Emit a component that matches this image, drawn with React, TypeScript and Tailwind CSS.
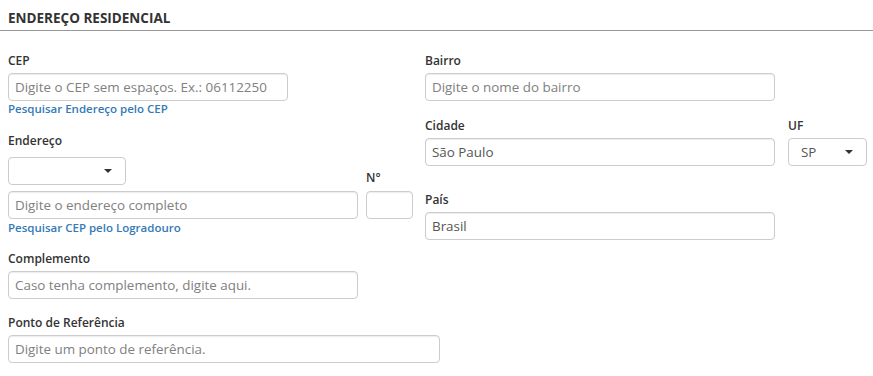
import React from 'react'

const inputCls =
  'block h-[28px] rounded-[4px] border border-[#ccc] bg-white px-[6px] text-[13.4px] text-[#555] placeholder:text-[#808080] shadow-[inset_0_1px_1px_rgba(0,0,0,0.075)] outline-none'

const labelCls = 'block h-[18px] text-[12px] font-semibold leading-[18px] text-[#333]'

const linkCls = 'block h-[16px] text-[11.5px] font-semibold leading-[16px] text-[#337ab7]'

const Caret = () => (
  <svg width="8" height="4" viewBox="0 0 8 4" className="fill-[#333]">
    <path d="M0 0h8L4 4z" />
  </svg>
)

const SelectBox: React.FC<{ value?: string; className?: string }> = ({ value, className }) => (
  <div
    className={`flex h-[28px] items-center justify-between rounded-[4px] border border-[#ccc] bg-white pl-[12px] pr-[13px] text-[13.4px] text-[#555] ${className ?? ''}`}
  >
    <span>{value ?? ''}</span>
    <Caret />
  </div>
)

const App: React.FC = () => {
  return (
    <div className="h-[376px] w-[873px] bg-white font-['Open_Sans',sans-serif]">
      {/* Section header */}
      <div className="h-[31px] border-b border-[#999] pl-2 pt-[8px] pr-[1px]">
        <h2 className="text-[13.5px] font-bold leading-[20px] text-[#333]">ENDEREÇO RESIDENCIAL</h2>
      </div>

      <div className="flex pl-2">
        {/* Left column */}
        <div className="w-[409px]">
          <div className="mt-[21px]">
            <label className={labelCls}>CEP</label>
            <input
              className={`${inputCls} mt-[3px] w-[280px]`}
              placeholder="Digite o CEP sem espaços. Ex.: 06112250"
            />
            <a className={linkCls}>Pesquisar Endereço pelo CEP</a>
          </div>

          <div className="mt-[15px] flex items-end gap-[8px]">
            <div className="w-[350px]">
              <label className={labelCls}>Endereço</label>
              <SelectBox className="mt-[7px] w-[118px]" />
              <input className={`${inputCls} mt-[6px] w-full`} placeholder="Digite o endereço completo" />
            </div>
            <div className="w-[47px]">
              <label className={labelCls}>N°</label>
              <input className={`${inputCls} mt-[4px] w-full`} />
            </div>
          </div>
          <a className={`${linkCls} mt-[1px]`}>Pesquisar CEP pelo Logradouro</a>

          <div className="mt-[14px] w-[350px]">
            <label className={labelCls}>Complemento</label>
            <input className={`${inputCls} mt-[3px] w-full`} placeholder="Caso tenha complemento, digite aqui." />
          </div>

          <div className="mt-[15px] w-[432px]">
            <label className={labelCls}>Ponto de Referência</label>
            <input className={`${inputCls} mt-[3px] w-full`} placeholder="Digite um ponto de referência." />
          </div>
        </div>

        {/* Right column */}
        <div className="ml-[8px] w-[443px]">
          <div className="mt-[21px] w-[350px]">
            <label className={labelCls}>Bairro</label>
            <input className={`${inputCls} mt-[3px] w-full`} placeholder="Digite o nome do bairro" />
          </div>

          <div className="mt-[16px] flex gap-[13px]">
            <div className="w-[350px]">
              <label className={labelCls}>Cidade</label>
              <input className={`${inputCls} mt-[3px] w-full`} defaultValue="São Paulo" />
            </div>
            <div className="w-[79px]">
              <label className={labelCls}>UF</label>
              <SelectBox className="mt-[3px]" value="SP" />
            </div>
          </div>

          <div className="mt-[25px] w-[350px]">
            <label className={labelCls}>País</label>
            <input className={`${inputCls} mt-[3px] w-full`} defaultValue="Brasil" />
          </div>
        </div>
      </div>
    </div>
  )
}

export default App
